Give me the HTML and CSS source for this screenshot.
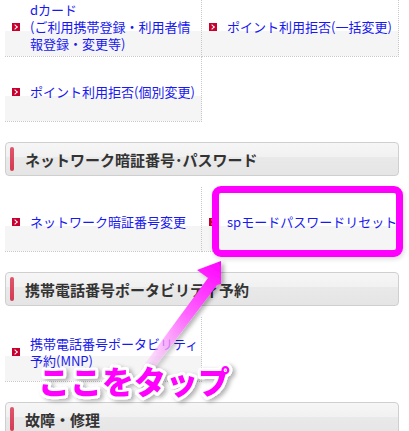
FILE: index.html
```html
<!DOCTYPE html>
<html lang="ja">
<head>
  <meta charset="UTF-8" />
  <meta name="viewport" content="width=device-width, initial-scale=1.0"/>
  <title>ドコモオンライン手続き</title>
  <link rel="stylesheet" href="styles.css">
</head>
<body>
  <div class="wrap">
    <!--契約・料金-->
    <div class="menu">
      <a class="menu-item" href="#">
        <span class="arrow"></span>
        <span class="label">dカード<br>(ご利用携帯登録・利用者情報登録・変更等)</span>
      </a>
      <a class="menu-item" href="#">
        <span class="arrow"></span>
        <span class="label">ポイント利用拒否(一括変更)</span>
      </a>
      <a class="menu-item" href="#">
        <span class="arrow"></span>
        <span class="label">ポイント利用拒否(個別変更)</span>
      </a>
      <div class="menu-empty"></div>
    </div>

    <h2 class="midashi"><span class="bar"></span>ネットワーク暗証番号･パスワード</h2>
    <div class="menu">
      <a class="menu-item" href="#">
        <span class="arrow"></span>
        <span class="label">ネットワーク暗証番号変更</span>
      </a>
      <a class="menu-item" href="#">
        <span class="arrow"></span>
        <span class="label">spモードパスワードリセット</span>
      </a>
    </div>

    <h2 class="midashi"><span class="bar"></span>携帯電話番号ポータビリティ予約</h2>
    <div class="menu">
      <a class="menu-item" href="#">
        <span class="arrow"></span>
        <span class="label">携帯電話番号ポータビリティ予約(MNP)</span>
      </a>
      <div class="menu-empty"></div>
    </div>

    <h2 class="midashi"><span class="bar"></span>故障・修理</h2>
  </div>

  <!--ここから注釈-->
  <div class="waku"></div>
  <svg class="chuushaku" width="409" height="431" viewBox="0 0 409 431">
    <defs>
      <linearGradient id="yajirushi" gradientUnits="userSpaceOnUse" x1="145" y1="372" x2="221" y2="261">
        <stop offset="0" stop-color="#ffd6ff" stop-opacity="0.4"/>
        <stop offset="0.5" stop-color="#ff6bff"/>
        <stop offset="1" stop-color="#ff00ff"/>
      </linearGradient>
      <filter id="kage" x="-20%" y="-20%" width="140%" height="140%">
        <feDropShadow dx="3" dy="2" stdDeviation="2" flood-color="#000" flood-opacity="0.3"/>
      </filter>
    </defs>
    <polygon filter="url(#kage)" fill="url(#yajirushi)"
      points="221,261 221,284 217,285 149,375 141,369 208,278 197,270"/>
    <text class="tap" x="38" y="394" filter="url(#kage)">ここをタップ</text>
  </svg>
</body>
</html>
```

FILE: styles.css
```css
* {
  margin: 0;
  padding: 0;
  box-sizing: border-box;
}

html, body {
  overflow: hidden;
}

body {
  font-family: 'Noto Sans CJK JP', 'Noto Sans', sans-serif;
  background-color: #fff;
  color: #333;
  width: 409px;
  height: 431px;
  position: relative;
}

.wrap {
  width: 394px;
  margin: -8px 0 0 5px;
}

.menu {
  display: grid;
  grid-template-columns: 197px 197px;
}

.menu-item {
  height: 65px;
  padding: 5px 0 0 7px;
  display: flex;
  align-items: center;
  gap: 10px;
  border-right: 1px dotted #c8c8c8;
  border-bottom: 1px dotted #c8c8c8;
  background: linear-gradient(#fff calc(100% - 25px), #f5f5f5 calc(100% - 25px));
  text-decoration: none;
  color: #1818f0;
  font-size: 13px;
  line-height: 17px;
}

.menu-empty {
  height: 65px;
}

.arrow {
  flex: none;
  width: 8px;
  height: 8px;
  background-color: #c8002e;
  position: relative;
}

.arrow::after {
  content: '';
  position: absolute;
  left: 1px;
  top: 2px;
  width: 3px;
  height: 3px;
  border-top: 1.5px solid #fff;
  border-right: 1.5px solid #fff;
  transform: rotate(45deg);
}

.midashi {
  height: 34px;
  margin: 20px 0 11px;
  border: 1px solid #cfcfcf;
  border-radius: 4px;
  background: linear-gradient(#f6f6f6 0%, #f1f1f1 44%, #e9e9e9 45%, #e5e5e5 100%);
  display: flex;
  align-items: center;
  padding-left: 4px;
  font-size: 15px;
  font-weight: bold;
  color: #333;
}

.bar {
  width: 4px;
  height: 24px;
  border-radius: 2px;
  background: linear-gradient(#e0566c, #d33a52);
  margin-right: 11px;
}

/* 注釈 */
.waku {
  position: absolute;
  left: 212px;
  top: 186px;
  width: 191px;
  height: 71px;
  border: 7px solid #ff00ff;
  border-radius: 9px;
  box-shadow: 1px 2px 5px rgba(0, 0, 0, 0.15);
}

.chuushaku {
  position: absolute;
  left: 0;
  top: 0;
  pointer-events: none;
}

.tap {
  font-family: 'Noto Sans CJK JP', sans-serif;
  font-size: 32px;
  font-weight: 900;
  fill: #ff00ff;
  stroke: #fff;
  stroke-width: 6px;
  stroke-linejoin: round;
  paint-order: stroke;
}
```
